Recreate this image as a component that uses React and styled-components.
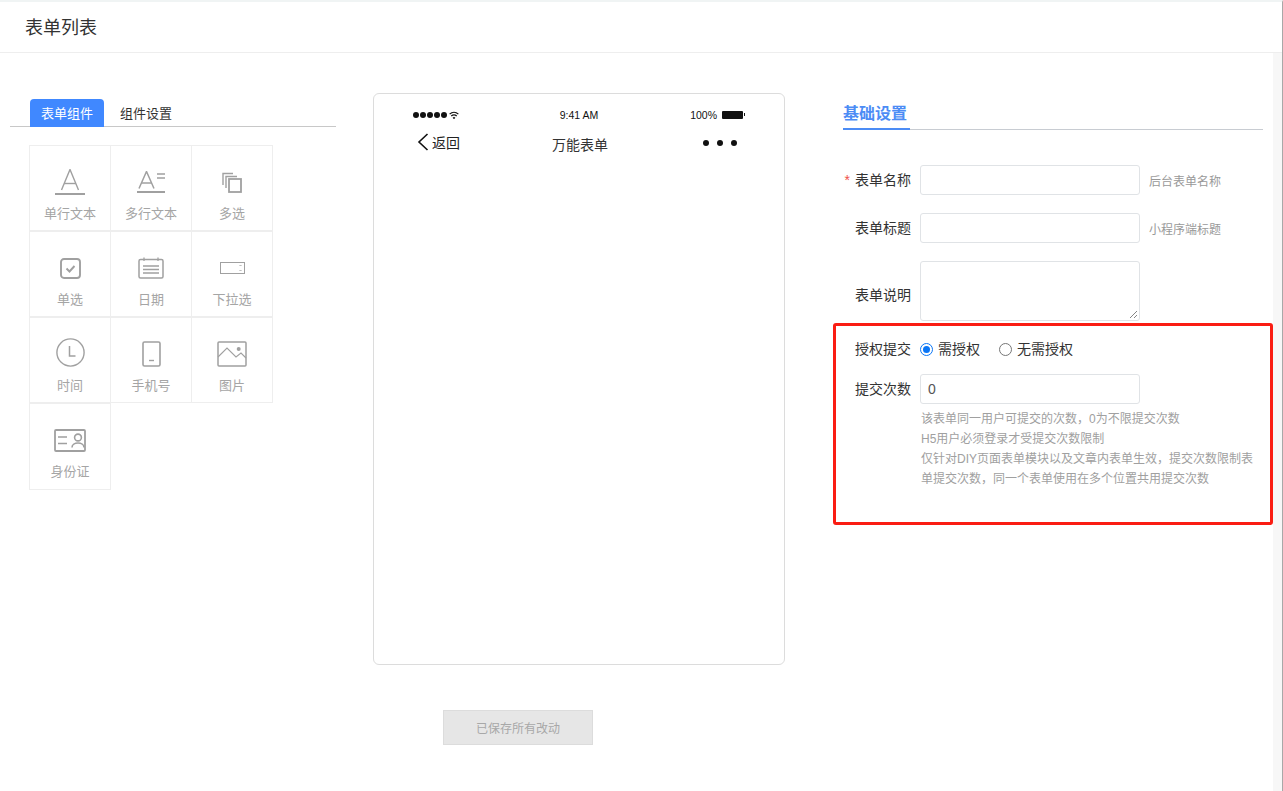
import React from "react"
import styled, { createGlobalStyle } from "styled-components"

const GlobalStyle = createGlobalStyle`
  html, body {
    margin: 0;
    padding: 0;
    height: 100%;
    overflow: hidden;
    background: #fff;
  }
  body {
    font-family: "Liberation Sans", "Noto Sans CJK SC", sans-serif;
    font-size: 13px;
    color: #333;
  }
  * { box-sizing: border-box; }
`

const Page = styled.div`
  width: 1283px;
  height: 791px;
  display: flex;
  flex-direction: column;
  background: #fff;
  overflow: hidden;
  border-top: 2px solid #f0f4f4;
  border-right: 1px solid #a8a8a8;
`

const Header = styled.div`
  height: 51px;
  flex: none;
  padding: 0 25px 2px;
  display: flex;
  align-items: center;
  font-size: 18px;
  color: #333;
  border-bottom: 1px solid #eeeeee;
`

const Main = styled.div`
  flex: 1;
  display: flex;
`

const Columns = styled.div`
  flex: 1;
  display: flex;
  padding-top: 40px;
`

const SideStrip = styled.div`
  width: 9px;
  flex: none;
  background: #f7f7f7;
`

const LeftCol = styled.div`
  width: 326px;
  margin-left: 10px;
  flex: none;
`

const Tabs = styled.div`
  height: 28px;
  margin-top: 6px;
  display: flex;
  padding-left: 20px;
  border-bottom: 1px solid #c8c8c8;
`

const Tab = styled.div`
  width: 74px;
  height: 28px;
  padding-bottom: 2px;
  display: flex;
  align-items: center;
  justify-content: center;
  font-size: 13px;
  border-radius: 4px 4px 0 0;
  background: ${(p) => (p.$active ? "#4088ff" : "transparent")};
  color: ${(p) => (p.$active ? "#fff" : "#333")};
  margin-right: ${(p) => (p.$active ? "5px" : "0")};
`

const Grid = styled.div`
  display: grid;
  grid-template-columns: repeat(3, 81px);
  grid-template-rows: 86px 86px 86px 87px;
  margin: 18px 0 0 19px;
  width: 244px;
`

const Cell = styled.div`
  border: 1px solid #eeeeee;
  margin-right: -1px;
  display: flex;
  flex-direction: column;
  align-items: center;
  color: #a5a5a5;
  font-size: 13px;
`

const IconBox = styled.div`
  height: 34px;
  margin-top: 19px;
  width: 100%;
  display: flex;
  align-items: center;
  justify-content: center;
  svg { display: block; }
`

const CellLabel = styled.div`
  margin-top: 5px;
  line-height: 20px;
`

const MiddleCol = styled.div`
  width: 412px;
  margin-left: 37px;
  flex: none;
`

const Phone = styled.div`
  height: 572px;
  border: 1px solid #dcdcdc;
  border-radius: 6px;
  background: #fff;
  color: #111;
`

const StatusBar = styled.div`
  display: grid;
  grid-template-columns: 1fr 1fr 1fr;
  align-items: center;
  height: 18px;
  margin-top: 12px;
  padding: 0 39px;
  font-size: 10.5px;
`

const Signal = styled.div`
  display: flex;
  align-items: center;
  gap: 1px;
`

const Dot = styled.span`
  width: 6px;
  height: 6px;
  border-radius: 50%;
  background: #111;
`

const Clock = styled.div`
  text-align: center;
`

const Battery = styled.div`
  display: flex;
  justify-content: flex-end;
  align-items: center;
  gap: 5px;
  margin-right: 2px;
`

const BatteryBody = styled.span`
  width: 21px;
  height: 8px;
  border-radius: 1px;
  background: #111;
  position: relative;
  &::after {
    content: "";
    position: absolute;
    right: -2px;
    top: 2px;
    width: 1px;
    height: 3px;
    background: #111;
  }
`

const NavBar = styled.div`
  display: grid;
  grid-template-columns: 1fr auto 1fr;
  padding: 0 47px 0 43px;
  margin-top: 6px;
  height: 30px;
`

const Back = styled.div`
  display: flex;
  align-items: center;
  gap: 3px;
  height: 24px;
  font-size: 14px;
  color: #222;
`

const NavTitle = styled.div`
  font-size: 14px;
  line-height: 20px;
  margin: 5px 0 0 6px;
  color: #333;
`

const NavMore = styled.div`
  display: flex;
  justify-content: flex-end;
  align-items: center;
  gap: 8px;
  height: 26px;
`

const MoreDot = styled.span`
  width: 6px;
  height: 6px;
  border-radius: 50%;
  background: #111;
`

const SaveRow = styled.div`
  margin: 45px 0 0 70px;
`

const SaveButton = styled.div`
  width: 150px;
  height: 35px;
  display: flex;
  align-items: center;
  justify-content: center;
  background: #e6e6e6;
  border: 1px solid #dcdcdc;
  color: #a8a8a8;
  font-size: 12px;
`

const RightCol = styled.div`
  width: 420px;
  margin-left: 58px;
  flex: none;
`

const SettingTitleBar = styled.div`
  display: flex;
  border-bottom: 1px solid #c8ccd2;
  height: 37px;
`

const SettingTitle = styled.div`
  width: 67px;
  height: 37px;
  line-height: 42px;
  font-size: 16px;
  font-weight: 700;
  color: #4c8cf5;
  border-bottom: 2px solid #4c8cf5;
`

const Row = styled.div`
  display: flex;
  align-items: center;
  margin-top: ${(p) => p.$top || 0}px;
`

const Label = styled.div`
  width: 68px;
  flex: none;
  text-align: right;
  margin-right: 9px;
  padding-top: ${(p) => p.$shift || 0}px;
  font-size: 14px;
  color: #333;
  line-height: 18px;
  white-space: nowrap;
`

const Star = styled.span`
  color: #f0504a;
  margin-right: 5px;
`

const TextInput = styled.div`
  width: 220px;
  height: 30px;
  border: 1px solid #e0e3e6;
  border-radius: 3px;
  background: #fff;
  padding-left: 7px;
  line-height: 28px;
  font-size: 14px;
  color: #555;
  flex: none;
`

const TextArea = styled.div`
  width: 220px;
  height: 60px;
  border: 1px solid #e0e3e6;
  border-radius: 3px;
  background: #fff;
  position: relative;
  flex: none;
  svg {
    position: absolute;
    right: 1px;
    bottom: 1px;
  }
`

const Hint = styled.div`
  margin-left: 9px;
  font-size: 12px;
  color: #999;
`

const Highlight = styled.div`
  width: 440px;
  height: 202px;
  margin: 2px 0 0 -10px;
  border: 3px solid #fa1d13;
  border-radius: 3px;
  padding: 13px 0 0 7px;
`

const RadioRow = styled.div`
  display: flex;
  align-items: center;
  height: 20px;
  font-size: 14px;
  color: #333;
`

const Radio = styled.span`
  width: 13px;
  height: 13px;
  border-radius: 50%;
  flex: none;
  background: #fff;
  border: 1px solid ${(p) => (p.$checked ? "#0a76f6" : "#767676")};
  margin: 0 5px 0 0;
  display: flex;
  align-items: center;
  justify-content: center;
  &::after {
    content: "";
    display: ${(p) => (p.$checked ? "block" : "none")};
    width: 7px;
    height: 7px;
    border-radius: 50%;
    background: #0a76f6;
  }
`

const RadioLabel = styled.span`
  margin: 0 19px 2px 0;
`

const Notes = styled.div`
  margin: 5px 0 0 78px;
  font-size: 12px;
  line-height: 20px;
  color: #a0a0a0;
  width: 340px;
`

const stroke = "#a0a0a0"

const icons = {
  single: (
    <svg width="30" height="26" viewBox="0 0 30 26" fill="none" stroke={stroke}>
      <path d="M6.5 21 L15 0.5 L23.5 21" strokeWidth="1.4" />
      <path d="M9 14.5 H21" strokeWidth="1.4" />
      <path d="M0 25 H30" strokeWidth="2" />
    </svg>
  ),
  multi: (
    <svg width="28" height="22" viewBox="0 0 28 22" fill="none" stroke={stroke}>
      <path d="M2 17.5 L9.5 0.5 L17 17.5" strokeWidth="1.5" />
      <path d="M4.5 12 H14.5" strokeWidth="1.5" />
      <path d="M20 3 H28 M20 7 H28" strokeWidth="1.7" />
      <path d="M0 21 H28" strokeWidth="2" />
    </svg>
  ),
  check: (
    <svg width="20" height="21" viewBox="0 0 20 21" fill="none" stroke={stroke}>
      <path d="M1 13 V1.5 H11" strokeWidth="1.4" />
      <path d="M4 16 V4.5 H15" strokeWidth="1.4" />
      <rect x="7" y="7" width="12" height="13" strokeWidth="1.8" />
    </svg>
  ),
  radio: (
    <svg width="21" height="21" viewBox="0 0 21 21" fill="none" stroke={stroke}>
      <rect x="1" y="1" width="19" height="19" rx="3" strokeWidth="1.9" />
      <path d="M6.5 10.5 L9.5 13.5 L14.5 8" strokeWidth="1.9" />
    </svg>
  ),
  date: (
    <svg width="26" height="22" viewBox="0 0 26 22" fill="none" stroke={stroke}>
      <rect x="1" y="2.5" width="24" height="18.5" rx="1.5" strokeWidth="1.5" />
      <path d="M6 0.5 V4 M20 0.5 V4" strokeWidth="1.3" />
      <path d="M5 9 H21 M5 12.5 H21 M5 16 H21" strokeWidth="1.3" />
    </svg>
  ),
  select: (
    <svg width="25" height="12" viewBox="0 0 25 12" fill="none" stroke={stroke}>
      <rect x="0.5" y="0.5" width="24" height="11" strokeWidth="1" />
      <path d="M19.5 4 L20.5 3 L21.5 4 M19.5 8 L20.5 9 L21.5 8" strokeWidth="0.9" />
    </svg>
  ),
  time: (
    <svg width="29" height="32" viewBox="0 0 29 32" fill="none" stroke={stroke}>
      <circle cx="14.5" cy="14.5" r="13.6" strokeWidth="1.4" />
      <path d="M13.5 8 V18 H19.5" strokeWidth="1.5" />
    </svg>
  ),
  phone: (
    <svg width="19" height="26" viewBox="0 0 19 26" fill="none" stroke={stroke}>
      <rect x="1" y="1" width="17" height="24" rx="1.5" strokeWidth="1.6" />
      <path d="M7 19.5 H12" strokeWidth="1.4" />
    </svg>
  ),
  image: (
    <svg width="30" height="26" viewBox="0 0 30 26" fill="none" stroke={stroke}>
      <rect x="1" y="1" width="28" height="24" rx="1" strokeWidth="1.5" />
      <path d="M1 16 L10 7 L19 16 L24 12 L29 17" strokeWidth="1.1" />
      <circle cx="21.7" cy="8" r="2" fill={stroke} stroke="none" />
    </svg>
  ),
  idcard: (
    <svg width="32" height="23" viewBox="0 0 32 23" fill="none" stroke={stroke}>
      <rect x="1" y="1" width="30" height="21" rx="1" strokeWidth="1.8" />
      <path d="M4 8 H13 M4 14.5 H13" strokeWidth="1.6" />
      <circle cx="24" cy="8.5" r="3.4" strokeWidth="1.6" />
      <path d="M18 18.5 C18 12.5 30 12.5 30 18.5" strokeWidth="1.6" />
    </svg>
  ),
}

const widgets = [
  { label: "单行文本", icon: icons.single },
  { label: "多行文本", icon: icons.multi },
  { label: "多选", icon: icons.check },
  { label: "单选", icon: icons.radio },
  { label: "日期", icon: icons.date },
  { label: "下拉选", icon: icons.select },
  { label: "时间", icon: icons.time },
  { label: "手机号", icon: icons.phone },
  { label: "图片", icon: icons.image },
  { label: "身份证", icon: icons.idcard },
]

const Wifi = () => (
  <svg width="10" height="9" viewBox="0 0 11 9" fill="none" stroke="#111" style={{ marginLeft: 1 }}>
    <path d="M0.7 3 C3.5 0.4 7.5 0.4 10.3 3" strokeWidth="1.4" />
    <path d="M2.5 5 C4.2 3.6 6.8 3.6 8.5 5" strokeWidth="1.4" />
    <path d="M4.3 7 L5.5 8.3 L6.7 7 C6 6.4 5 6.4 4.3 7 Z" fill="#111" strokeWidth="0.5" />
  </svg>
)

export default () => (
  <Page>
    <GlobalStyle />
    <Header>表单列表</Header>
    <Main>
      <Columns>
        <LeftCol>
          <Tabs>
            <Tab $active>表单组件</Tab>
            <Tab>组件设置</Tab>
          </Tabs>
          <Grid>
            {widgets.map((w) => (
              <Cell key={w.label}>
                <IconBox>{w.icon}</IconBox>
                <CellLabel>{w.label}</CellLabel>
              </Cell>
            ))}
          </Grid>
        </LeftCol>
        <MiddleCol>
          <Phone>
            <StatusBar>
              <Signal>
                {[0, 1, 2, 3, 4].map((i) => <Dot key={i} />)}
                <Wifi />
              </Signal>
              <Clock>9:41 AM</Clock>
              <Battery>
                100%
                <BatteryBody />
              </Battery>
            </StatusBar>
            <NavBar>
              <Back>
                <svg width="12" height="18" viewBox="0 0 12 18" fill="none" stroke="#111">
                  <path d="M10.5 1 L2 9 L10.5 17" strokeWidth="1.6" />
                </svg>
                返回
              </Back>
              <NavTitle>万能表单</NavTitle>
              <NavMore>
                <MoreDot />
                <MoreDot />
                <MoreDot />
              </NavMore>
            </NavBar>
          </Phone>
          <SaveRow>
            <SaveButton>已保存所有改动</SaveButton>
          </SaveRow>
        </MiddleCol>
        <RightCol>
          <SettingTitleBar>
            <SettingTitle>基础设置</SettingTitle>
          </SettingTitleBar>
          <Row $top={35}>
            <Label><Star>*</Star>表单名称</Label>
            <TextInput />
            <Hint>后台表单名称</Hint>
          </Row>
          <Row $top={18}>
            <Label>表单标题</Label>
            <TextInput />
            <Hint>小程序端标题</Hint>
          </Row>
          <Row $top={18}>
            <Label $shift={8}>表单说明</Label>
            <TextArea>
              <svg width="9" height="9" viewBox="0 0 9 9" stroke="#666" fill="none">
                <path d="M1 8 L8 1 M5 8 L8 5" strokeWidth="0.8" />
              </svg>
            </TextArea>
          </Row>
          <Highlight>
            <Row>
              <Label>授权提交</Label>
              <RadioRow>
                <Radio $checked />
                <RadioLabel>需授权</RadioLabel>
                <Radio />
                <RadioLabel>无需授权</RadioLabel>
              </RadioRow>
            </Row>
            <Row $top={15}>
              <Label>提交次数</Label>
              <TextInput>0</TextInput>
            </Row>
            <Notes>
              该表单同一用户可提交的次数，0为不限提交次数<br />
              H5用户必须登录才受提交次数限制<br />
              仅针对DIY页面表单模块以及文章内表单生效，提交次数限制表单提交次数，同一个表单使用在多个位置共用提交次数
            </Notes>
          </Highlight>
        </RightCol>
      </Columns>
      <SideStrip />
    </Main>
  </Page>
)
